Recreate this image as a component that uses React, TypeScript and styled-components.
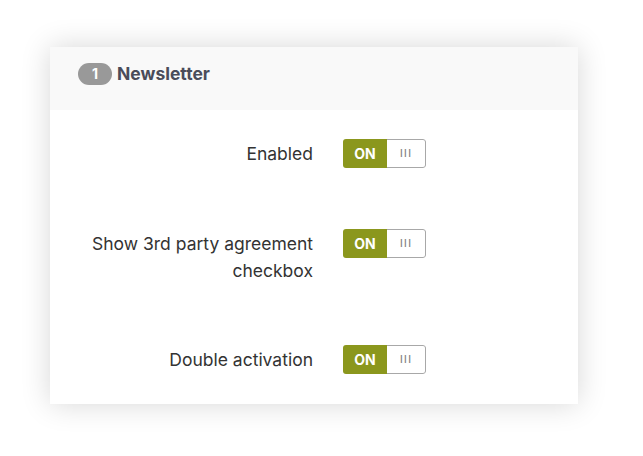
import React from "react";
import styled, { createGlobalStyle } from "styled-components";

const Global = createGlobalStyle`
  html, body { margin: 0; padding: 0; background: #ffffff; }
  body { font-family: Inter, "Noto Sans", sans-serif; }
`;

const Page = styled.div`
  width: 643px;
  height: 456px;
  padding: 47px 0 0 50px;
  box-sizing: border-box;
`;

const Card = styled.div`
  width: 528px;
  background: #ffffff;
  box-shadow: 0 0 28px rgba(0, 0, 0, 0.16);
`;

const Header = styled.div`
  height: 63px;
  box-sizing: border-box;
  background: #f9f9f9;
  display: flex;
  align-items: center;
  padding: 0 0 10px 28px;
  gap: 5px;
`;

const Badge = styled.span`
  width: 34px;
  height: 22px;
  border-radius: 11px;
  background: #999999;
  color: #ffffff;
  font-size: 14px;
  font-weight: 700;
  display: flex;
  align-items: center;
  justify-content: center;
`;

const Title = styled.span`
  font-size: 17.5px;
  font-weight: 700;
  color: #4a4c5a;
`;

const Body = styled.div`
  display: grid;
  grid-template-columns: 263px auto;
  column-gap: 30px;
  row-gap: 61px;
  padding: 29px 0 30px;
  align-items: start;
`;

const Label = styled.div`
  text-align: right;
  font-size: 17.5px;
  line-height: 27px;
  color: #333333;
  padding-left: 30px;
  margin-top: 1px;
`;

const Switch = styled.div`
  display: flex;
  width: 83px;
  height: 29px;
  border-radius: 3px;
  overflow: hidden;
  box-sizing: border-box;
`;

const OnPart = styled.div`
  width: 44px;
  background: #8b971d;
  color: #ffffff;
  font-size: 14px;
  font-weight: 700;
  display: flex;
  align-items: center;
  justify-content: center;
`;

const OffPart = styled.div`
  flex: 1;
  border: 1px solid #a8a8a8;
  border-left: none;
  border-radius: 0 3px 3px 0;
  background: #ffffff;
  color: #808080;
  font-size: 11px;
  letter-spacing: 1px;
  display: flex;
  align-items: center;
  justify-content: center;
  font-family: "DejaVu Sans", sans-serif;
`;

const Toggle = () => (
  <Switch>
    <OnPart>ON</OnPart>
    <OffPart>III</OffPart>
  </Switch>
);

export default function App() {
  const rows = ["Enabled", "Show 3rd party agreement checkbox", "Double activation"];
  return (
    <Page>
      <Global />
      <Card>
        <Header>
          <Badge>1</Badge>
          <Title>Newsletter</Title>
        </Header>
        <Body>
          {rows.map((r) => (
            <React.Fragment key={r}>
              <Label>{r}</Label>
              <Toggle />
            </React.Fragment>
          ))}
        </Body>
      </Card>
    </Page>
  );
}
